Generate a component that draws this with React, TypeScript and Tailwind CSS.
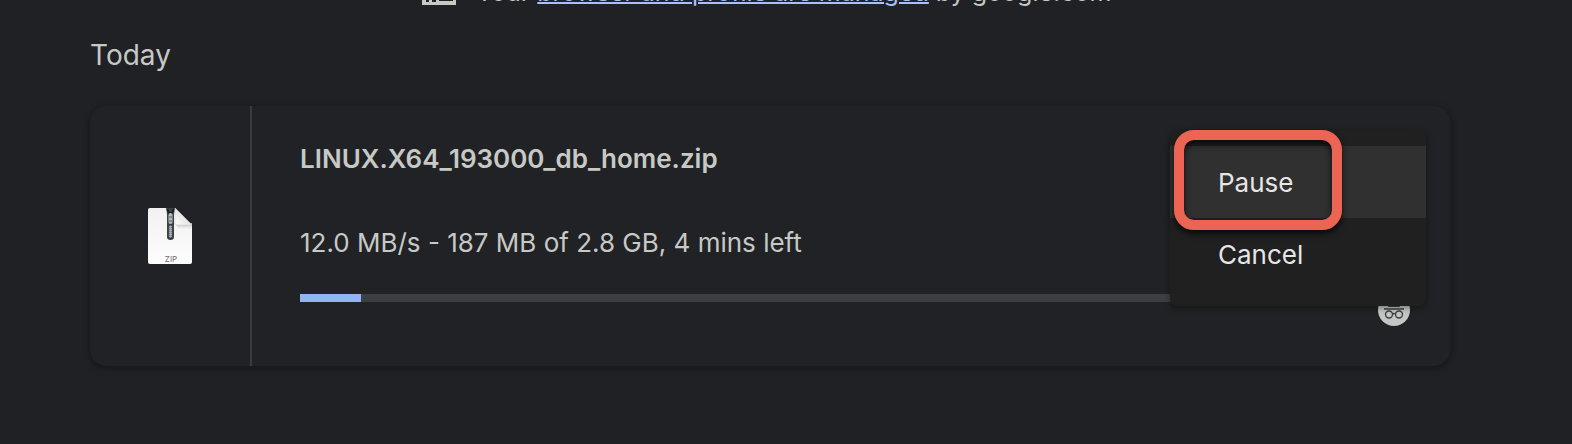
import React from "react";

function BuildingIcon() {
  return (
    <svg viewBox="0 0 34 30" className="h-[30px] w-[34px] shrink-0" fill="none" aria-hidden="true">
      <path d="M0 0h17v6h17v24H0z" fill="#c7c9c5" />
      <path d="M4 4h3v3H4zM10 4h4v3h-4zM4 10h3v3H4zM10 10h4v3h-4zM4 16h3v3H4zM10 16h4v3h-4zM4 22h3v5H4zM10 22h4v5h-4zM17 10h14v16H17z" fill="#202124" />
    </svg>
  );
}

function ZipIcon() {
  return (
    <svg viewBox="0 0 46 58" className="h-[58px] w-[46px]" role="img" aria-label="ZIP archive">
      <defs>
        <linearGradient id="sheet" x1="0" y1="0" x2="0" y2="1">
          <stop offset="0" stopColor="#f1f1f1" />
          <stop offset="1" stopColor="#fdfdfd" />
        </linearGradient>
        <linearGradient id="fold" x1="0" y1="1" x2="1" y2="0">
          <stop offset="0" stopColor="#ffffff" />
          <stop offset="0.5" stopColor="#e4e4e4" />
        </linearGradient>
        <linearGradient id="shade" x1="0" y1="0" x2="0" y2="1">
          <stop offset="0.1" stopColor="#b4b4b4" />
          <stop offset="1" stopColor="#f4f4f4" stopOpacity="0" />
        </linearGradient>
      </defs>
      <path d="M3 1h25l17 17v37q0 2-2 2H3q-2 0-2-2V3q0-2 2-2z" fill="url(#sheet)" />
      <path d="M28 16h17v7H32z" fill="url(#shade)" />
      <path d="M28 1l17 17H30q-2 0-2-2z" fill="url(#fold)" stroke="#cfcfcf" strokeWidth="0.500" />
      <path d="M19 1h9l-1 6v23q0 3-3.500 3t-3.500-3V7z" fill="#3c4046" />
      <path d="M20.500 2l1.500 4h3l1.500-4" fill="none" stroke="#17191c" strokeWidth="1.500" />
      <rect x="21.500" y="6" width="4" height="11" rx="2" fill="#b4b9be" />
      <path d="M22 10h3M22 14h3" stroke="#555b62" />
      <rect x="21.500" y="18" width="4" height="13" rx="2" fill="#a5abb1" stroke="#22262a" strokeWidth="0.600" />
      <path d="M22.500 20v9M24.500 20v9" stroke="#5b6168" strokeWidth="0.700" strokeDasharray="1 1" />
      <text x="24" y="55" textAnchor="middle" fontSize="8" fill="#6c6c6c" className="font-['Inter',sans-serif]">ZIP</text>
    </svg>
  );
}

function IncognitoIcon() {
  return (
    <svg viewBox="0 0 32 32" className="size-8" role="img" aria-label="Incognito download">
      <circle cx="16" cy="16" r="16" fill="#c4c6c3" />
      <g fill="none" stroke="#3c4043" strokeWidth="1.400">
        <circle cx="11" cy="20.500" r="3.500" />
        <circle cx="21" cy="20.500" r="3.500" />
        <path d="M14.500 20q1.500-1 3 0M6 15h20" />
      </g>
      <path d="M10 13l2-7 4 1 4-1 2 7z" fill="#3c4043" />
    </svg>
  );
}

export default function App() {
  return (
    <main className="min-h-screen bg-[#202124] pr-[122px] pl-[90px] font-['Inter',sans-serif] text-[26px] leading-8 text-[#c7c9c5]">
      <header className="flex h-2 items-end overflow-hidden pl-[332px] text-[25px]">
        <div className="flex items-end">
          <div className="pb-[3px]">
            <BuildingIcon />
          </div>
          <p className="pl-5 leading-8 whitespace-nowrap">
            Your{" "}
            <a href="#management" className="text-[#a8c0f8] underline decoration-2 underline-offset-1">
              browser and profile are managed
            </a>{" "}
            by google.com
          </p>
        </div>
      </header>

      <h1 className="pt-[31px] text-[28px] leading-8">Today</h1>

      <section className="relative mt-[35px] flex rounded-2xl bg-[#212225] shadow-[0_2px_6px_1px_rgba(0,0,0,0.3)]">
        <div className="flex w-[160px] shrink-0 items-center justify-center">
          <ZipIcon />
        </div>
        <div className="min-w-0 flex-1 border-l-2 border-[#3a3b3e] pt-[37px] pr-10 pb-10 pl-12">
          <h2 className="font-semibold">LINUX.X64_193000_db_home.zip</h2>
          <p className="mt-[52px]">12.0 MB/s - 187 MB of 2.8 GB, 4 mins left</p>
          <div className="mt-[35px] flex items-start">
            <div role="progressbar" aria-label="Download progress" aria-valuenow={7} className="h-2 flex-1 bg-[#3c4043]">
              <div className="h-2 w-[61px] bg-[#93b3f5]" />
            </div>
            <div className="-ml-8">
              <IncognitoIcon />
            </div>
          </div>
        </div>

        <div role="menu" className="absolute top-6 right-6 w-64 rounded-lg bg-[#202020] py-4 text-[#e6e6e6] shadow-[0_2px_6px_rgba(0,0,0,0.4)]">
          <button role="menuitem" className="block h-[72px] w-full bg-[#303030] px-12 pt-0.5 text-left">
            Pause
          </button>
          <button role="menuitem" className="block h-[72px] w-full px-12 pt-0.5 text-left">
            Cancel
          </button>
          <div className="pointer-events-none absolute top-0 left-1 h-[100px] w-[168px] rounded-[20px] border-[10px] border-[#ec6453] shadow-[0_4px_6px_rgba(0,0,0,0.7),inset_0_4px_6px_rgba(0,0,0,0.7)]" />
        </div>
      </section>
    </main>
  );
}
